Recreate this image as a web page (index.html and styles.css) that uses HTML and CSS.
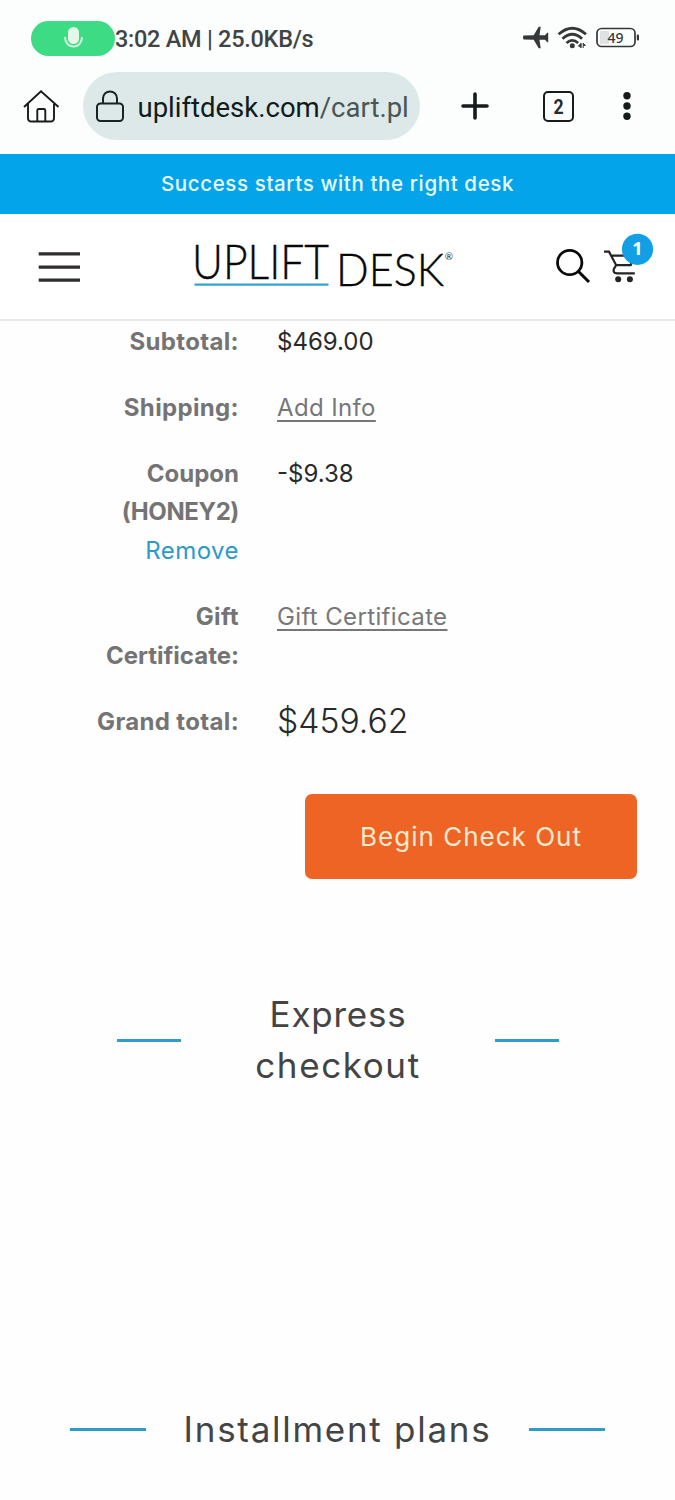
FILE: index.html
```html
<!DOCTYPE html>
<html lang="en">
<head>
<meta charset="utf-8">
<title>Uplift Desk cart</title>
<link rel="stylesheet" href="styles.css">
</head>
<body>
<div class="status">
  <div class="mic"><svg width="20" height="24" viewBox="0 0 20 24"><rect x="5" y="1" width="11" height="17" rx="5.500" fill="#e5f7e9"/><path d="M2 11c0 5.500 3.500 9.500 8.500 9.500s8.500-4 8.500-9.500" fill="none" stroke="#d2f5dc" stroke-width="2"/></svg></div>
  <span class="clock">3:02 AM | 25.0KB/s</span>
  <svg class="signals" width="120" height="28" viewBox="522 24 120 28">
    <path d="M523.500 35.600l10.200-.4 5-8.400h2l-1.200 8.400h5.500l2.300-2.500h.9v9.600h-.9l-2.300-2.500h-5.500l1.200 8.400h-2l-5-8.400-10.200-.4q-1.300-1.900 0-3.800z" fill="#353838"/>
    <g fill="none" stroke="#353838" stroke-width="2.800"><path d="M558.600 34.200q13.700-12 27.400 0"/><path d="M562.500 38.700q9.800-8.800 19.600 0"/><path d="M566.500 43q5.800-5.200 11.600 0"/></g>
    <circle cx="572.300" cy="45.800" r="2.500" fill="#353838"/><path d="M578.300 46.200l2.800-3V48M583.200 48v-4.800l2.200 2.200h-2.200" stroke="#353838" stroke-width="1" fill="#353838"/>
    <rect x="600" y="31" width="9" height="13" fill="#dfe2e2"/><rect x="597" y="28.500" width="38" height="18" rx="4.500" fill="none" stroke="#353838" stroke-width="1.700"/><rect x="636.800" y="34.500" width="2.200" height="6" rx="1" fill="#353838"/>
    <text x="607.500" y="43" textLength="16" class="battery">49</text>
  </svg>
</div>
<div class="browser">
  <svg class="home" width="38" height="36" viewBox="22 88 38 36" fill="none" stroke="#161b1b" stroke-width="1.900"><path d="M24 107l17-15.700L58.500 107M28 104v14q0 3.500 3.500 3.500h19q3.500 0 3.500-3.500v-14M37.300 121v-10.500q0-1.500 1.500-1.500h5q1.500 0 1.500 1.500V121"/></svg>
  <div class="address">
    <svg width="30" height="34" viewBox="95 89 30 34" fill="none" stroke="#1b2222" stroke-width="2"><rect x="97" y="103.500" width="26" height="17.500" rx="3.500"/><path d="M103 103v-4.500c0-9.500 14-9.500 14 0v4.500"/></svg>
    <span class="url">upliftdesk.com<span>/cart.pl</span></span>
  </div>
  <svg class="plus" width="28" height="28" viewBox="0 0 28 28"><path d="M14 2v24M2 14h24" stroke="#161b1b" stroke-width="3.600" stroke-linecap="round"/></svg>
  <div class="tabs"><span>2</span></div>
  <svg class="dots" width="10" height="28" viewBox="0 0 10 28" fill="#161b1b"><circle cx="5" cy="3.700" r="3.700"/><circle cx="5" cy="14" r="3.700"/><circle cx="5" cy="24.300" r="3.700"/></svg>
</div>
<div class="banner"><span>Success starts with the right desk</span></div>
<header class="header">
  <svg class="menu" width="42" height="32" viewBox="38 251 42 32" fill="#302d2e"><path d="M38.700 252.300H80v3.300H38.700zM38.700 265.400H80v3.300H38.700zM38.700 278.500H80v3.300H38.700z"/></svg>
  <svg class="logo" width="264" height="68" viewBox="192 232 264 68">
    <text x="192" y="279" textLength="137" lengthAdjust="spacingAndGlyphs" class="brand">UPLIFT</text>
    <rect x="194.500" y="283.500" width="134" height="2.200" fill="#2ea3cf"/>
    <text x="336" y="285.500" textLength="108" lengthAdjust="spacingAndGlyphs" class="brand desk">DESK</text>
    <text x="444.700" y="259.500" class="reg">®</text>
  </svg>
  <svg class="tools" width="102" height="54" viewBox="553 232 102 54">
    <circle cx="569.700" cy="262.500" r="12.200" fill="none" stroke="#090909" stroke-width="2.800"/><path d="M578.500 271.500l10.500 10.500" stroke="#090909" stroke-width="3"/>
    <path d="M604 251.700h5l7.200 13.500h14.500l3.800-9.500h-22.500M616.200 265.200l-2.200 3.500q-1.500 4.600 3 4.600h17.800" fill="none" stroke="#242424" stroke-width="2.200"/><circle cx="618.200" cy="279.200" r="3" fill="#242424"/><circle cx="629.900" cy="279.200" r="3" fill="#242424"/>
    <circle cx="637.500" cy="249.300" r="15.600" fill="#129fe6"/><text x="637.300" y="255" text-anchor="middle" class="count">1</text>
  </svg>
</header>
<main>
  <dl class="totals">
    <dt class="subtotal">Subtotal:</dt><dd>$469.00</dd>
    <dt class="shipping">Shipping:</dt><dd><a>Add Info</a></dd>
    <dt>Coupon<br><span class="code">(HONEY2)</span><br><a class="remove">Remove</a></dt><dd>-$9.38</dd>
    <dt><span class="gift">Gift</span><br>Certificate:</dt><dd><a>Gift Certificate</a></dd>
    <dt class="total">Grand total:</dt><dd class="grand">$459.62</dd>
  </dl>
  <button class="checkout">Begin Check Out</button>
  <h2 class="express"><i></i><span>Express<br><span class="wide">checkout</span></span><i></i></h2>
  <h2 class="plans"><i></i><span>Installment plans</span><i></i></h2>
</main>
</body>
</html>
```
FILE: styles.css
```css
* { box-sizing: border-box; }
body { margin: 0; background: #fefefe; color: #292a2b; font-family: Inter, sans-serif; height: 1500px; overflow: hidden; }
svg { display: block; flex: none; }
.status { height: 72px; padding: 4px 33px 0 31px; background: #fbfefd; display: flex; align-items: center; font-family: Roboto, sans-serif; }
.mic { width: 84px; height: 35px; border-radius: 18px; background: #3ddc84; display: grid; place-items: center; }
.clock { font-size: 23.500px; color: #414444; white-space: nowrap; font-weight: 500; letter-spacing: -.27px; padding-top: 1px; }
.signals { margin-left: auto; }
.battery { font: 500 14px "Noto Sans", sans-serif; fill: #353838; }
.browser { height: 82px; background: #fbfefd; display: flex; align-items: flex-start; padding-left: 22px; font-family: Roboto, sans-serif; }
.home { margin-top: 16px; }
.address { margin-left: 23px; width: 337px; height: 68px; border-radius: 34px; background: #dce9e8; display: flex; align-items: center; padding-left: 12px; gap: 12.500px; }
.url { color: #111b1b; font-size: 27.500px; white-space: nowrap; padding-top: 2px; }
.url span { color: #4a5555; }
.plus { margin: 20px 0 0 41px; }
.tabs { width: 31px; height: 31px; margin: 19px 0 0 53.500px; border: 2px solid #161b1b; border-radius: 5px; text-align: center; font-weight: 700; font-size: 20px; line-height: 29px; }
.tabs span { display: block; transform: scaleX(.88); }
.dots { margin: 20px 0 0 48px; }
.banner { height: 60px; background: #04a4eb; color: #e9fbff; text-align: center; font-size: 20.500px; line-height: 59px; font-weight: 450; letter-spacing: .62px; }
.header { height: 107px; border-bottom: 2px solid #e9e9e9; background: #fff; display: flex; padding-left: 38px; }
.menu { margin-top: 37px; }
.logo { margin: 18px 0 0 112px; }
.brand { font: 300 46.500px Lato, sans-serif; fill: #080808; stroke: #080808; stroke-width: .4px; }
.desk { font-size: 45.500px; }
.reg { font: 10px Lato, sans-serif; fill: #333; }
.tools { margin: 18px 0 0 97px; }
.count { font: 700 18px "Open Sans", sans-serif; fill: #fff; }
.totals { margin: 0; padding-top: 1.500px; display: grid; grid-template-columns: 239px 1fr; column-gap: 38px; row-gap: 27.400px; line-height: 38.700px; font-size: 24px; }
dt { text-align: right; color: #747474; font-weight: 700; }
dd { margin: 0; }
dd a { color: #777; text-decoration: underline; text-decoration-thickness: 2px; text-underline-offset: 4px; letter-spacing: .36px; }
.subtotal, .shipping, .total, .gift { letter-spacing: .35px; }
.code { letter-spacing: -.4px; }
.remove { color: #2c9bc5; font-weight: 400; letter-spacing: .45px; }
.grand { font-size: 33.700px; font-weight: 330; margin-top: -1px; }
.checkout { display: block; margin: 52.500px 0 0 305px; width: 332px; height: 85px; padding: 0; border: 0; border-radius: 7px; background: #ed6425; color: #ffe9ce; font: 370 26px Inter, sans-serif; letter-spacing: 1px; }
h2 { margin: 0; display: flex; align-items: center; justify-content: space-between; text-align: center; color: #444; font-weight: 430; font-size: 35px; line-height: 51px; letter-spacing: .75px; }
h2 i { height: 3px; background: #2f9cca; }
.express { margin-top: 110px; padding: 0 116px 0 117px; }
.express i { width: 64px; }
.wide { letter-spacing: 1.600px; }
.plans { margin-top: 312.500px; padding: 0 70px; letter-spacing: 1.720px; }
.plans i { width: 76px; }
```
